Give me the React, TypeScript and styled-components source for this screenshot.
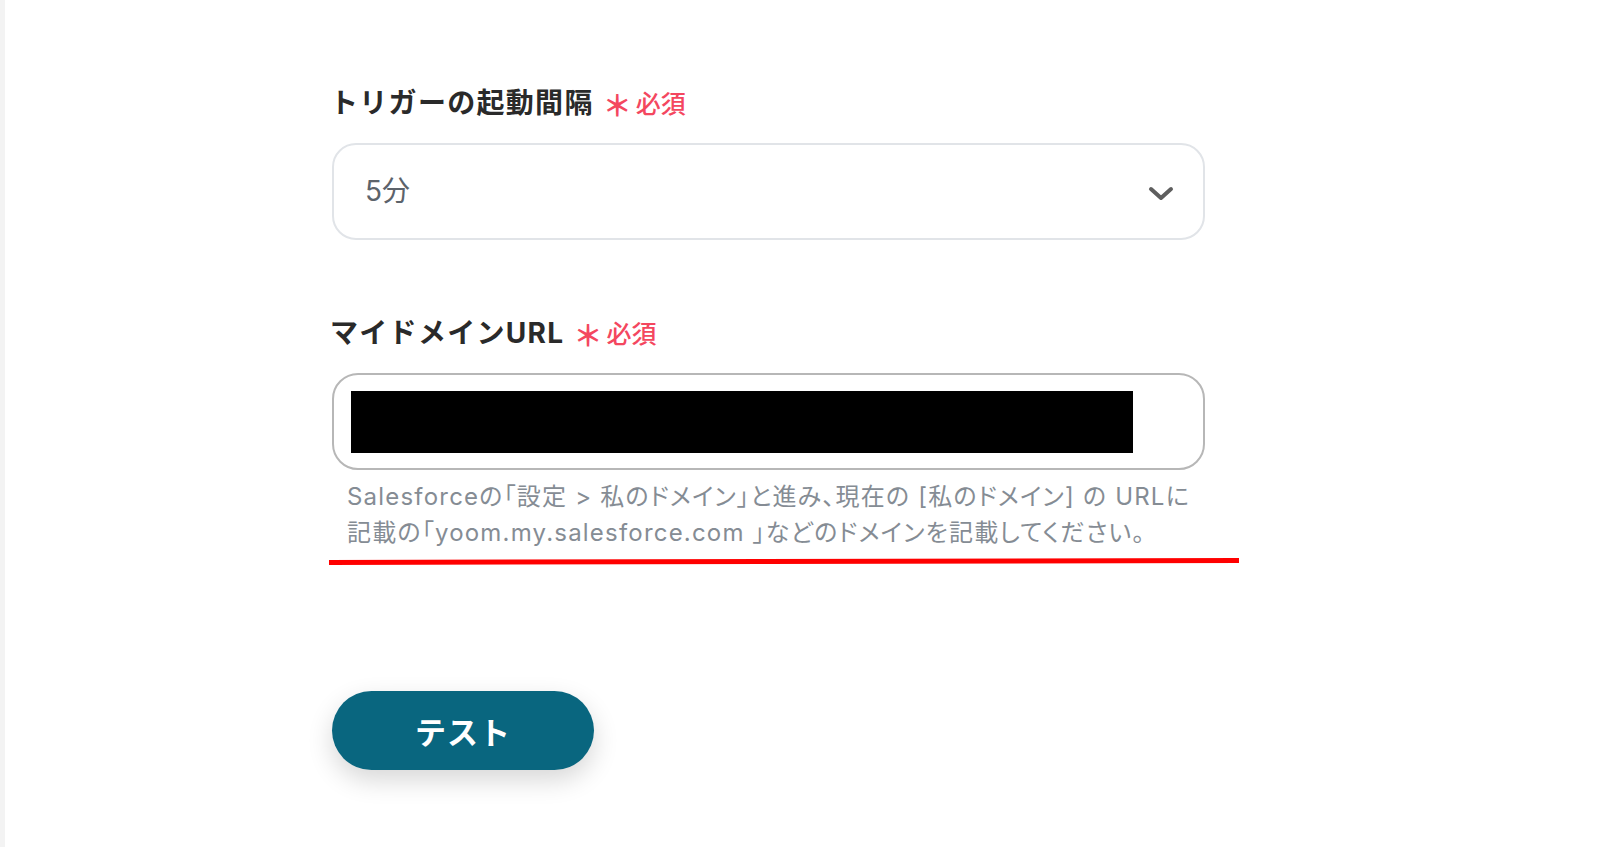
import styled, { createGlobalStyle } from 'styled-components'

const GlobalStyle = createGlobalStyle`
  html, body {
    margin: 0;
    padding: 0;
    background: #ffffff;
  }
  body {
    font-family: 'Inter', 'Noto Sans CJK JP', sans-serif;
  }
`

export default function App() {
  return (
    <Page>
      <GlobalStyle />
      <EdgeStrip />
      <Form>
        <Field>
          <Label>
            トリガーの起動間隔
            <Required>
              <Star>＊</Star>必須
            </Required>
          </Label>
          <Select>
            <SelectValue>5分</SelectValue>
            <Chevron width="28" height="20" viewBox="0 0 28 20">
              <path d="M4 5 L14 14 L24 5" fill="none" stroke="#5e5e5e" strokeWidth="4" strokeLinecap="round" strokeLinejoin="round" />
            </Chevron>
          </Select>
        </Field>

        <Field $top={74}>
          <Label>
            マイドメインURL
            <Required>
              <Star>＊</Star>必須
            </Required>
          </Label>
          <TextBox>
            <Redacted />
          </TextBox>
          <Help>
            Salesforceの「設定 &gt; 私のドメイン」と進み、現在の [私のドメイン] の URLに
            <br />
            記載の「yoom.my.salesforce.com 」などのドメインを記載してください。
          </Help>
          <Underline />
        </Field>

        <TestButton>テスト</TestButton>
      </Form>
    </Page>
  )
}

const Page = styled.div`
  display: flex;
  width: 1600px;
  height: 847px;
  overflow: hidden;
  background: #fff;
`

const EdgeStrip = styled.div`
  width: 5px;
  flex-shrink: 0;
  background: #f3f3f3;
`

const Form = styled.div`
  display: flex;
  flex-direction: column;
  width: 873px;
  padding: 84px 0 0 327px;
`

const Field = styled.div<{ $top?: number }>`
  display: flex;
  flex-direction: column;
  margin-top: ${(p) => p.$top ?? 0}px;
`

const Label = styled.div`
  display: flex;
  align-items: baseline;
  font-size: 28px;
  line-height: 38px;
  font-weight: 700;
  color: #2a2a2a;
  letter-spacing: 1.3px;
  margin-left: -2px;
`

const Required = styled.span`
  display: inline-flex;
  align-items: baseline;
  margin-left: 9px;
  font-size: 25px;
  font-weight: 500;
  color: #f4475f;
  letter-spacing: 0;
`

const Star = styled.span`
  font-size: 29px;
  font-weight: 700;
  margin-right: 4px;
  position: relative;
  top: 4px;
`

const Select = styled.div`
  display: flex;
  align-items: center;
  justify-content: space-between;
  box-sizing: border-box;
  height: 97px;
  margin-top: 20px;
  padding: 4px 28px 0 31px;
  border: 2px solid #e1e4e8;
  border-radius: 24px;
  background: #fff;
`

const SelectValue = styled.span`
  font-size: 28px;
  color: #5c636b;
  margin-top: -9px;
`

const Chevron = styled.svg`
  display: block;
`

const TextBox = styled.div`
  display: flex;
  align-items: center;
  box-sizing: border-box;
  height: 97px;
  margin-top: 20px;
  padding: 0 70px 0 17px;
  border: 2px solid #b7b7b7;
  border-radius: 26px;
  background: #fff;
`

const Redacted = styled.div`
  flex: 1;
  height: 62px;
  background: #000;
`

const Help = styled.p`
  margin: 9px 0 0 15px;
  font-size: 24px;
  line-height: 36px;
  color: #858c94;
  letter-spacing: 1.2px;
  font-feature-settings: 'palt';
  white-space: nowrap;
`

const Underline = styled.div`
  width: 910px;
  height: 5px;
  margin: 8px 0 0 -3px;
  background: #ff0000;
  transform: rotate(-0.12deg);
`

const TestButton = styled.button`
  display: flex;
  align-items: center;
  justify-content: center;
  width: 262px;
  height: 79px;
  margin-top: 127px;
  border: none;
  border-radius: 40px;
  background: #09667f;
  color: #fff;
  font-family: 'Noto Sans CJK JP', sans-serif;
  font-size: 31px;
  font-weight: 700;
  letter-spacing: 1px;
  box-shadow: 0 10px 26px rgba(0, 0, 0, 0.16);
`
